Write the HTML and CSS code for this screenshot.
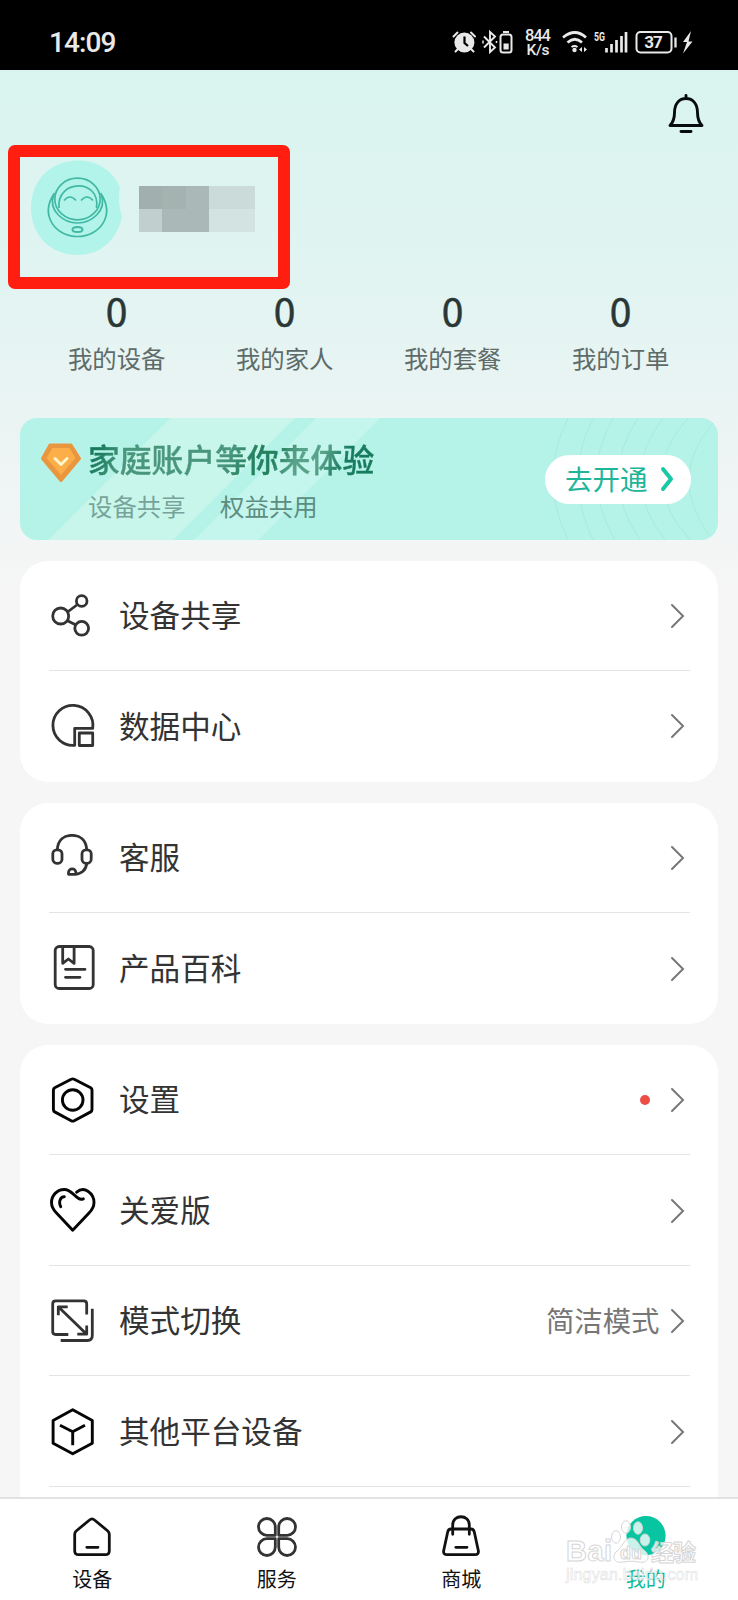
FILE: index.html
```
<!DOCTYPE html>
<html lang="zh-CN">
<head>
<meta charset="utf-8">
<title>我的</title>
<link rel="stylesheet" href="styles.css">
</head>
<body>
<div class="app">
  <header class="status">
    <span class="clock">14:09</span>
    <svg class="status-icons" width="250" height="34" viewBox="447 25 250 34">
      <g fill="none" stroke="#e9e9e9" stroke-width="2">
        <circle cx="463.400" cy="42.500" r="10" fill="#e9e9e9" stroke="none"/>
        <path d="M452.500 36.500l4-4M474 36.500l-4-4M456.500 49.500l-2 2M470.500 49.500l2 2" stroke-linecap="round"/>
        <path d="M463.500 36.500v6.500l3.500 3" stroke="#000" stroke-width="2.200"/>
        <path d="M483 36.500l11 11-5 4.500V32l5 4.500-11 11" stroke-width="1.900"/>
        <path d="M482 40.500v3M495.500 41v2" stroke-width="1.500"/>
        <rect x="499.500" y="34.500" width="11" height="18" rx="2.500"/>
        <path d="M502 32h6"/>
        <path d="M502.500 43.500h5.200v6h-5.200z" fill="#e9e9e9" stroke="none"/>
        <path d="M562 37.500q12-10 23 0M566.500 42.500q7.500-6.500 14.500 0" stroke-width="2.700"/>
        <path d="M570.500 47q3-2 6 0" stroke-width="2"/>
        <circle cx="573.500" cy="50" r="2.200" fill="#e9e9e9" stroke="none"/>
        <path d="M578 49.500l3-2.500v5zM586 49.500l-3-2.500v5z" fill="#e9e9e9" stroke="none"/>
        <path d="M605.500 48v4.500M610.500 44v8.500M615.500 40v12.500M620.500 36v16.500M625 32v20.500" stroke-width="2.700"/>
        <rect x="635.500" y="32" width="35" height="20.500" rx="4"/>
        <path d="M674.500 37.500v10" stroke-width="2.300"/>
        <path d="M690 31l-8 11h4l-4 11.500 9.500-12h-4z" fill="#e9e9e9" stroke="none"/>
      </g>
      <g class="status-text" text-anchor="middle">
        <text x="537" y="40.500" font-size="16.500" textLength="26">844</text>
        <text x="537" y="55" font-size="15.500" textLength="23">K/s</text>
        <text x="598.500" y="40.500" font-size="12.500" font-weight="700" textLength="11" lengthAdjust="spacingAndGlyphs">5G</text>
        <text x="652.500" y="48" font-size="17" font-weight="700" textLength="18.500">37</text>
      </g>
    </svg>
  </header>

  <main class="page">
    <div class="toolbar">
      <svg width="38" height="42" viewBox="0 0 38 42" fill="none" stroke="#080b0b" stroke-width="2.900" stroke-linecap="round" stroke-linejoin="round">
        <path d="M19 2.500v3M3 32.500h32c-3.500-3.500-4.500-8-4.500-13C30.500 11 26 5.500 19 5.500S7.500 11 7.500 19.500c0 5-1 9.500-4.500 13zM14 38.500h10"/>
      </svg>
    </div>

    <section class="profile">
      <svg class="avatar" width="94" height="96" viewBox="0 0 94 96" fill="none" stroke="#41b8a4" stroke-width="1.700">
        <path d="M47 .5c17 0 34 8 42 27-2 9-1 20 2 29-5 24-22 38.500-44 38.500C20 95 0 76 0 48S20 .5 47 .5z" fill="#b2f4ea" stroke="none"/>
        <ellipse cx="46.500" cy="39" rx="22.700" ry="20.800"/>
        <path d="M28 48c-3-29 42-30 37.500 0"/>
        <path d="M23.500 33C8 56 25 76.500 46.500 76.500S85 56 69.500 33"/>
        <path d="M22.500 35C17 51 33 63 46.500 63S76 51 70.500 35"/>
        <path d="M33 40.500q6-7 12 0M50 40.500q6-7 12 0"/>
        <ellipse cx="46.500" cy="69.500" rx="5" ry="2.600" stroke-width="2"/>
      </svg>
      <div class="mosaic"><i class="a"></i><i class="b"></i><i class="c"></i><i class="e"></i><i class="e"></i><i class="d"></i><i class="c"></i><i class="c"></i><i class="f"></i><i class="f"></i></div>
    </section>

    <section class="stats">
      <div class="stat"><b>0</b><span>我的设备</span></div>
      <div class="stat"><b>0</b><span>我的家人</span></div>
      <div class="stat"><b>0</b><span>我的套餐</span></div>
      <div class="stat"><b>0</b><span>我的订单</span></div>
    </section>

    <section class="banner">
      <svg class="gem" width="42" height="40" viewBox="0 0 42 40">
        <path d="M10 2h21l8.500 13.500L21 37.500 2.500 15.500z" fill="#e9963f" stroke="#e9963f" stroke-width="3" stroke-linejoin="round"/>
        <path d="M12.500 5h17l6 10L21 32 6.500 15z" fill="#fcae48"/>
        <path d="M15 15.500l6 6 6-6" fill="none" stroke="#fff5c9" stroke-width="3" stroke-linecap="round" stroke-linejoin="round"/>
      </svg>
      <div class="banner-copy">
        <div class="banner-title">家庭账户等你来体验</div>
        <div class="banner-sub"><span>设备共享</span><span>权益共用</span></div>
      </div>
      <svg class="waves" width="210" height="122" viewBox="0 0 210 122" fill="none" stroke="#a5ebde" stroke-width="1">
        <path d="M60 0q-30 60 0 122M85 0q-30 60 0 122M105 0q-34 60 2 122M130 0q-40 60 2 122M155 0q-46 60 2 122M180 0q-54 60 2 122M205 5q-46 54-4 112"/>
      </svg>
      <div class="open-btn"><span>去开通</span>
        <svg width="14" height="26" viewBox="0 0 14 26" fill="none" stroke="#19c8a4" stroke-width="4" stroke-linecap="round" stroke-linejoin="round"><path d="M3 3l8 10-8 10"/></svg>
      </div>
    </section>

    <section class="card">
      <div class="row">
        <svg class="icon" viewBox="0 0 48 48"><circle cx="12.700" cy="24" r="8"/><circle cx="33.700" cy="9" r="5.300"/><circle cx="33.700" cy="36.300" r="6.900"/><path d="M18.500 18.500L29.700 12M18.500 29.500l9.500 4" stroke="none"/><path d="M19.500 20l10-7.500M19 28.500l9 4.500"/></svg>
        <span class="label">设备共享</span><svg class="chev" viewBox="0 0 16 26"><path d="M3 2l11 11L3 24"/></svg>
      </div>
      <div class="row">
        <svg class="icon" viewBox="0 0 48 48"><path d="M44.700 26.300a20 20 0 1 0-18 17V26.300z"/><path d="M31.300 31h13.400v12.500H31.300z"/></svg>
        <span class="label">数据中心</span><svg class="chev" viewBox="0 0 16 26"><path d="M3 2l11 11L3 24"/></svg>
      </div>
    </section>

    <section class="card">
      <div class="row">
        <svg class="icon" viewBox="0 0 48 48"><path d="M9.300 15.500C10 6 16 1.300 24 1.300s14 4.700 14.700 14.200M38.700 29.500c-.7 7-6 10.800-12 10.800H20.500v-1.800a3.700 3.700 0 0 1 7.400 0v1.800"/><rect x="4.800" y="15.800" width="9.200" height="13.500" rx="4"/><rect x="34" y="15.800" width="9.200" height="13.500" rx="4"/></svg>
        <span class="label">客服</span><svg class="chev" viewBox="0 0 16 26"><path d="M3 2l11 11L3 24"/></svg>
      </div>
      <div class="row">
        <svg class="icon" viewBox="0 0 48 48"><rect x="7.200" y="1.500" width="38" height="42" rx="4"/><path d="M14.700 2v16.300l5.700-4.300 5.700 4.300V2M17.500 24.300h19.500M17.500 32.300H32" stroke-linecap="round"/></svg>
        <span class="label">产品百科</span><svg class="chev" viewBox="0 0 16 26"><path d="M3 2l11 11L3 24"/></svg>
      </div>
    </section>

    <section class="card last">
      <div class="row">
        <svg class="icon dark" viewBox="0 0 48 48"><path d="M23.200 3.300q1.500-.8 3 0l16.500 8.500q1.300.8 1.300 2.300v19.500q0 1.500-1.300 2.300l-16.500 8.800q-1.500.8-3 0L6.700 35.900q-1.300-.8-1.300-2.300V14.100q0-1.500 1.300-2.300z"/><circle cx="24.700" cy="24" r="10.300"/></svg>
        <span class="label">设置</span><i class="dot"></i><svg class="chev" viewBox="0 0 16 26"><path d="M3 2l11 11L3 24"/></svg>
      </div>
      <div class="row">
        <svg class="icon dark" viewBox="0 0 48 48"><path d="M35.300 11.800c-7 3-10-9.300-19-9.300C9 2.500 3.500 8.500 3.500 15.500c0 5 2 7.500 5 10.500l16.200 17.300L41 26c3-3 5-5.500 5-10.500C46 6.500 36.500-1.500 28.700 5.200M16.300 9.800c-4 0-6 5.200-3.600 9.900" stroke-linecap="round"/></svg>
        <span class="label">关爱版</span><svg class="chev" viewBox="0 0 16 26"><path d="M3 2l11 11L3 24"/></svg>
      </div>
      <div class="row">
        <svg class="icon" viewBox="0 0 48 48"><path d="M38.700 17.500V6.800q0-3-3-3h-28q-3 0-3 3v27.700q0 3 3 3h12.600M44.300 11.800v26.700q0 5-5 5H12.700M10.300 9.800l28.400 27.400M19.700 9.800h-9.400v8.400M29.300 37.200h9.400v-8.700"/></svg>
        <span class="label">模式切换</span><span class="value">简洁模式</span><svg class="chev" viewBox="0 0 16 26"><path d="M3 2l11 11L3 24"/></svg>
      </div>
      <div class="row">
        <svg class="icon dark" viewBox="0 0 48 48"><path d="M24.700 1.700l19.600 10.700v22.800L24.700 45.800 5.100 35.200V12.400zM12 17.200l12.700 6.600L37 17.200M24.700 23.800v13.400"/></svg>
        <span class="label">其他平台设备</span><svg class="chev" viewBox="0 0 16 26"><path d="M3 2l11 11L3 24"/></svg>
      </div>
      <div class="row next"></div>
    </section>
  </main>

  <nav class="tabs">
    <div class="tab"><svg class="tab-icon" viewBox="0 0 44 44"><path d="M19.500 5q2.500-2.200 5 0l13.300 11q1.500 1.300 1.500 3.200v16.500q0 4-4 4H8.700q-4 0-4-4V19.200q0-1.900 1.500-3.200zM16.800 32.300h11.200" stroke-linecap="round"/></svg><span>设备</span></div>
    <div class="tab"><svg class="tab-icon grey" viewBox="0 0 44 44"><path d="M20.300 20.300h-8.400a8.400 8.400 0 1 1 8.400-8.400zM23.700 20.300h8.400a8.400 8.400 0 1 0-8.400-8.400zM20.300 23.700h-8.400a8.400 8.400 0 1 0 8.400 8.400zM23.700 23.700h8.400a8.400 8.400 0 1 1-8.400 8.400z"/></svg><span>服务</span></div>
    <div class="tab"><svg class="tab-icon" viewBox="0 0 44 44"><path d="M12 14h20q2.600 0 3.300 3l4 18.500q.8 4.200-3.500 4.200H8.200q-4.300 0-3.500-4.200l4-18.500q.7-3 3.300-3zM13.700 19.300V10c0-11 16.600-11 16.600 0v9.300M16.800 32.300h11.200" stroke-linecap="round"/></svg><span>商城</span></div>
    <div class="tab on"><svg class="tab-icon" viewBox="0 0 44 44"><circle cx="22" cy="20.700" r="19.600" fill="#07c5a0" stroke="none"/></svg><span>我的</span></div>
    <svg class="watermark" width="140" height="70" viewBox="562 1516 140 70">
      <g class="wm-main">
        <text x="566" y="1561" font-size="29" font-weight="700" textLength="46">Bai</text>
        <ellipse cx="616" cy="1537" rx="4.500" ry="6.200"/><ellipse cx="626" cy="1527" rx="4.500" ry="6.200"/><ellipse cx="638" cy="1528" rx="4.500" ry="6.200"/><ellipse cx="645" cy="1540" rx="4.800" ry="6"/>
        <path d="M631 1538c-7 0-8 9-14 13-6 5-3 13 6 11 6-1 11-1 16 0 9 2 12-6 6-11-6-4-7-13-14-13z"/>
        <text x="620" y="1559" font-size="18" font-weight="700" textLength="22">du</text>
        <text x="651" y="1561" font-size="23" font-weight="700" textLength="45">经验</text>
      </g>
      <text class="wm-url" x="566" y="1580" font-size="16" textLength="132">jingyan.baidu.com</text>
    </svg>
  </nav>
</div>
</body>
</html>
```

FILE: styles.css
```
* { box-sizing: border-box; }
body {
  margin: 0;
  font-family: "Noto Sans CJK SC", sans-serif;
  color: #333;
}
.app {
  position: relative;
  display: flex;
  flex-direction: column;
  width: 738px;
  height: 1600px;
  overflow: hidden;
  background: #f6f6f6;
}
.status {
  display: flex;
  flex: none;
  align-items: center;
  justify-content: space-between;
  height: 70px;
  padding: 14px 40px 0 49px;
  background: #000;
}
.clock {
  padding-top: 2px;
  font: 500 28px/30px Roboto, sans-serif;
  letter-spacing: -0.9px;
  color: #e9e9e9;
}
.status-text { font-family: Roboto, sans-serif; font-weight: 500; fill: #e9e9e9; }
.page {
  flex: 1;
  min-height: 0;
  overflow: hidden;
  padding: 0 20px;
  background: linear-gradient(#d9f4ef 0, #e0f4f1 180px, #e9f4f3 330px, #f6f6f6 520px);
}
.toolbar {
  display: flex;
  justify-content: flex-end;
  height: 75px;
  padding: 23px 13px 0 0;
}
.profile {
  display: flex;
  gap: 14px;
  width: 282px;
  height: 143.5px;
  margin-left: -12px;
  padding: 3px 11px;
  border: 12px solid #ff1e10;
  border-radius: 7px;
}
.mosaic {
  display: grid;
  grid-template-columns: repeat(5, 23.3px);
  grid-template-rows: repeat(2, 23px);
  margin-top: 26px;
}
.mosaic .a { background: #a1b0ae; }
.mosaic .b { background: #a4b2b0; }
.mosaic .c { background: #aab9b7; }
.mosaic .d { background: #c1d0ce; }
.mosaic .e { background: #cadbd9; }
.mosaic .f { background: #d2e3e1; }
.stats {
  display: grid;
  grid-template-columns: repeat(4, 168px);
  margin-left: 12.7px;
  height: 129px;
}
.stat { text-align: center; }
.stat b {
  display: block;
  height: 46px;
  font-size: 39px;
  font-weight: 400;
  line-height: 42px;
  -webkit-text-stroke: 0.5px #293735;
  color: #293735;
}
.stat span {
  display: block;
  margin-top: 6.5px;
  font-size: 24.4px;
  line-height: 34px;
  color: #5f6b69;
}
.banner {
  position: relative;
  display: flex;
  width: 698px;
  height: 122px;
  padding-left: 20px;
  overflow: hidden;
  border-radius: 17px;
  background:
    linear-gradient(135deg, transparent 0 106px, #c8f6eb 107px 194px, #b5f3e8 195px 209px, #c5f6ed 210px 254px, transparent 255px),
    #b5f3e8;
}
.gem { margin-top: 25px; }
.banner-copy { margin-left: 6px; }
.banner-title {
  padding-top: 18px;
  font-size: 31.8px;
  font-weight: 500;
  line-height: 44px;
  color: transparent;
  -webkit-text-stroke: 0.4px transparent;
  background: linear-gradient(115deg, #187b5e 0 8%, #49967c 17% 50%, #24805f 59% 65%, #58a289 72% 80%, #187b5e 88%);
  -webkit-background-clip: text;
  background-clip: text;
}
.banner-sub {
  display: flex;
  gap: 34.5px;
  margin-top: 1px;
  font-size: 24.4px;
  line-height: 50px;
  color: #76a49a;
}
.banner-sub span + span { color: #5d8c81; }
.waves { position: absolute; right: 0; top: 0; }
.open-btn {
  position: relative;
  display: flex;
  align-items: center;
  width: 146px;
  height: 49px;
  margin: 37px 27px 0 auto;
  padding-left: 20px;
  border-radius: 25px;
  background: #fff;
  font-size: 27.5px;
  line-height: 46px;
  color: #20b598;
}
.open-btn span { height: 49px; }
.open-btn svg { margin-left: 12px; }
.card {
  width: 698px;
  margin-top: 21px;
  border-radius: 28px;
  background: #fff;
}
.card.last { border-radius: 28px 28px 0 0; }
.row {
  display: flex;
  position: relative;
  align-items: center;
  height: 109.2px;
  padding-top: 1.5px;
  margin: 0 28px 0 29px;
}
.row + .row {
  height: 110.6px;
  padding-top: 1.5px;
  border-top: 1.5px solid #e4e4e4;
}
.card:not(.last) .row + .row { height: 112px; padding-bottom: 1px; }
.icon {
  width: 48px;
  height: 48px;
  flex: none;
  margin-left: -1px;
  fill: none;
  stroke: #333;
  stroke-width: 2.8;
  stroke-linejoin: round;
}
.icon.dark { stroke: #050505; stroke-width: 2.9; }
.label {
  flex: 1;
  margin-left: 23px;
  padding-bottom: 3.5px;
  font-size: 30.6px;
  line-height: 44px;
  color: #333;
}
.value { margin-right: 9px; padding-bottom: 3.5px; font-size: 28.4px; color: #777; }
.dot {
  width: 10px;
  height: 10px;
  margin-right: 19px;
  border-radius: 50%;
  background: #ed4c47;
}
.chev {
  width: 16px;
  height: 26px;
  margin-right: 5.5px;
  fill: none;
  stroke: #777;
  stroke-width: 2;
  stroke-linecap: round;
}
.tabs {
  position: relative;
  display: grid;
  flex: none;
  grid-template-columns: repeat(4, 184.5px);
  height: 103px;
  border-top: 2px solid #e2e2e2;
  background: #fff;
}
.tab {
  display: flex;
  flex-direction: column;
  align-items: center;
  padding-top: 16px;
  font-size: 20px;
  line-height: 30px;
  color: #111;
}
.tab span { margin-top: 5px; }
.tab-icon {
  width: 44px;
  height: 44px;
  fill: none;
  stroke: #111;
  stroke-width: 2.8;
  stroke-linejoin: round;
}
.tab-icon.grey { stroke: #333; }
.tab.on { color: #10b99a; }
.watermark {
  position: absolute;
  left: 562px;
  top: 17px;
  font-family: "Liberation Sans", "Noto Sans CJK SC", sans-serif;
}
.wm-main {
  fill: rgba(255, 255, 255, 0.78);
  stroke: #d6d6d6;
  stroke-width: 1;
}
.wm-url { fill: rgba(255, 255, 255, 0.6); stroke: #ddd; stroke-width: 0.5; }
```
